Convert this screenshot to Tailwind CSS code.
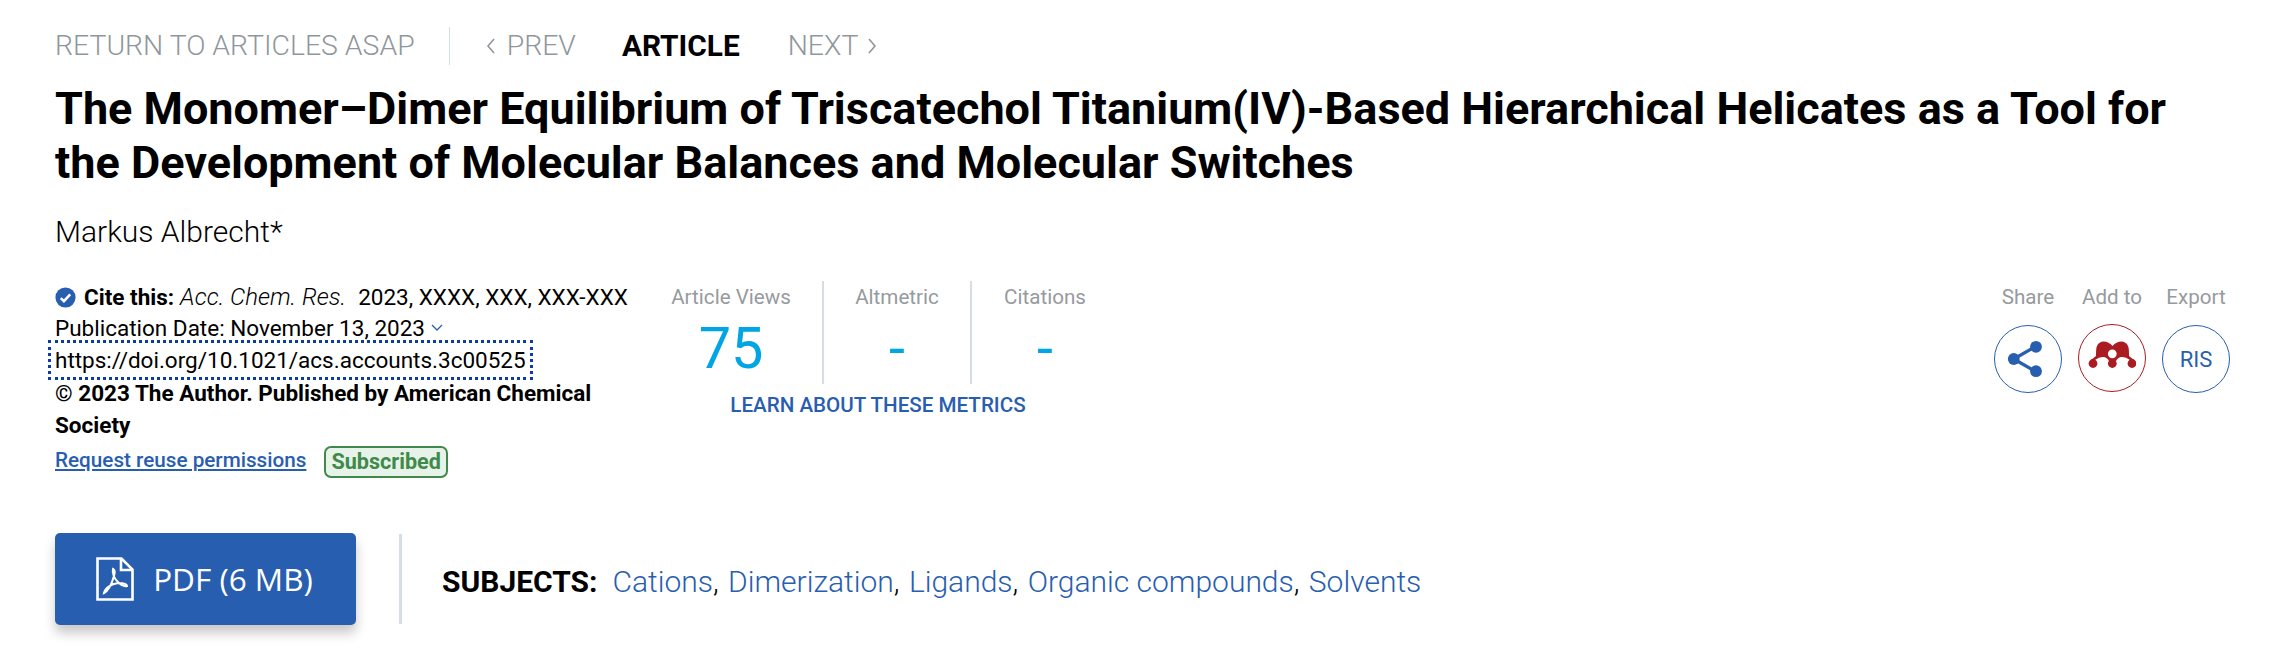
<!DOCTYPE html>
<html><head><meta charset="utf-8"><script src="https://cdn.jsdelivr.net/npm/@tailwindcss/browser@4"></script></head>
<body class="bg-white">
<div class="w-[2270px] h-[658px] overflow-hidden bg-white text-black pl-[55px] pr-[40px] font-['Roboto',sans-serif]">
  <nav class="flex items-center h-[38px] mt-[27px] text-[28.4px] font-light text-[#8f979c] leading-none">
    <span>RETURN TO ARTICLES ASAP</span>
    <span class="w-px h-[38px] bg-[#d5dee5] ml-[34px] mr-[35px]"></span>
    <svg class="w-[12px] h-[18px] mr-[10px]" viewBox="0 0 12 18" fill="none" stroke="#8f979c" stroke-width="1.6"><path d="M9 2 3 9l6 7"/></svg>
    <span>PREV</span>
    <span class="ml-[46px] font-bold text-black text-[29.8px]">ARTICLE</span>
    <span class="ml-[48px]">NEXT</span>
    <svg class="w-[12px] h-[18px] ml-[8px]" viewBox="0 0 12 18" fill="none" stroke="#8f979c" stroke-width="1.6"><path d="M3 2l6 7-6 7"/></svg>
  </nav>
  <h1 class="mt-[17px] text-[45px] leading-[54px] font-bold w-[2125px]">The Monomer–Dimer Equilibrium of Triscatechol Titanium(IV)-Based Hierarchical Helicates as a Tool for the Development of Molecular Balances and Molecular Switches</h1>
  <div class="mt-[24px] mb-[1px] text-[30px] font-light leading-[36px]">Markus Albrecht*</div>
  <div class="flex mt-[30px]">
    <div class="w-[570px] text-[22.5px] leading-[32px] shrink-0">
      <div class="flex items-center h-[32px] mt-[1px] -mb-[1px] whitespace-nowrap">
        <svg class="w-[21px] h-[21px] mr-[8px] shrink-0" viewBox="0 0 20 20"><circle cx="10" cy="10" r="9.6" fill="#285eb0"/><path d="M5.5 10.5l3 3 6-6.5" fill="none" stroke="#fff" stroke-width="2.4"/></svg>
        <b class="font-bold">Cite this:</b><i class="ml-[6px] font-light text-[24px]">Acc. Chem. Res.</i><span class="ml-[12px]">2023, XXXX, XXX, XXX-XXX</span>
      </div>
      <div class="flex items-center whitespace-nowrap h-[32px]">Publication Date: November 13, 2023<svg class="w-[14px] h-[10px] ml-[5px] shrink-0" viewBox="0 0 14 10" fill="none" stroke="#285eb0" stroke-width="1.3"><path d="M2 2l5 5 5-5"/></svg></div>
      <div class="w-fit h-[32px] whitespace-nowrap outline-[3px] outline-dotted outline-offset-[1px] outline-[#0a3ca5] px-[3px] -ml-[3px]">https://doi.org/10.1021/acs.accounts.3c00525</div>
      <div class="font-bold w-[540px] mt-[1px]">© 2023 The Author. Published by American Chemical Society</div>
      <div class="flex items-center h-[34px] mt-[2px]">
        <a class="text-[#285eb0] text-[20.7px] font-medium underline">Request reuse permissions</a>
        <span class="ml-[18px] h-[32px] leading-[28px] px-[5px] rounded-[7px] border-2 border-[#3f8a4a] bg-[#e7f3e8] text-[#3f8a4a] text-[21.6px] font-bold mt-[4px]">Subscribed</span>
      </div>
    </div>
    <div class="w-[478px] ml-[15px] mt-[1px] shrink-0">
      <div class="flex h-[103px]">
        <div class="w-[184px] flex flex-col items-center border-r-2 border-[#d5dee5] shrink-0">
          <span class="text-[20.6px] leading-[28px] mt-[2px] text-[#969a9e]">Article Views</span>
          <span class="text-[57.6px] leading-[72px] text-[#00a5e3] mt-[2px]">75</span>
        </div>
        <div class="w-[148px] flex flex-col items-center border-r-2 border-[#d5dee5] shrink-0">
          <span class="text-[20.6px] leading-[28px] mt-[2px] text-[#969a9e]">Altmetric</span>
          <span class="text-[57.6px] leading-[72px] text-[#00a5e3] mt-[2px]">-</span>
        </div>
        <div class="w-[146px] flex flex-col items-center shrink-0">
          <span class="text-[20.6px] leading-[28px] mt-[2px] text-[#969a9e]">Citations</span>
          <span class="text-[57.6px] leading-[72px] text-[#00a5e3] mt-[2px]">-</span>
        </div>
      </div>
      <div class="text-center text-[20.6px] leading-[28px] font-medium text-[#285eb0] mt-[7px] -translate-x-[1px]">LEARN ABOUT THESE METRICS</div>
    </div>
    <div class="ml-auto flex mt-[3px] gap-[16px] items-start">
      <div class="flex flex-col items-center w-[68px]">
        <span class="text-[20.6px] leading-[28px] text-[#969a9e]">Share</span>
        <span class="mt-[14px] w-[68px] h-[68px] rounded-full border-[1.5px] border-[#285eb0] flex items-center justify-center">
          <svg class="w-[40px] h-[40px] mr-[4px]" viewBox="0 0 36 36"><path d="M28 6 7 18l21 12" fill="none" stroke="#285eb0" stroke-width="3"/><circle cx="27" cy="7" r="5.3" fill="#285eb0"/><circle cx="7" cy="18" r="5.3" fill="#285eb0"/><circle cx="27" cy="29" r="5.3" fill="#285eb0"/></svg>
        </span>
      </div>
      <div class="flex flex-col items-center w-[68px]">
        <span class="text-[20.6px] leading-[28px] text-[#969a9e] whitespace-nowrap">Add to</span>
        <span class="mt-[13px] w-[68px] h-[68px] rounded-full border-[1.5px] border-[#ab1c22] flex items-center justify-center">
          <svg class="w-[48px] h-[28px] mb-[8px]" viewBox="0 0 48 28"><path d="M3 20 8 16C8 12 8 8 9 6 10 3 13 1.5 15.5 1.5 19 1.5 22 3 24.5 6 27 3 30 1.5 33.5 1.5 36 1.5 39 3 40 6 41 8 41 12 41 16L46 20H42C39 18 37 17 34 17 31 17 29 19 28 21H21C20 19 18 17 15 17 12 17 10 18 7 20Z" fill="#ab1c22"/><circle cx="24.3" cy="13.8" r="4.4" fill="#fff"/><circle cx="5" cy="23.5" r="4.4" fill="#ab1c22"/><circle cx="24.3" cy="23.5" r="4.4" fill="#ab1c22"/><circle cx="44" cy="23.5" r="4.4" fill="#ab1c22"/></svg>
        </span>
      </div>
      <div class="flex flex-col items-center w-[68px]">
        <span class="text-[20.6px] leading-[28px] text-[#969a9e]">Export</span>
        <span class="mt-[14px] w-[68px] h-[68px] rounded-full border-[1.5px] border-[#285eb0] flex items-center justify-center text-[#285eb0] text-[22px]">RIS</span>
      </div>
    </div>
  </div>
  <div class="flex items-center mt-[56px]">
    <a class="w-[301px] h-[92px] rounded-[5px] bg-[#285eb0] shadow-[0_8px_12px_rgba(0,0,0,0.22)] flex items-center justify-center text-white text-[31.5px]">
      <svg class="w-[38px] h-[44px] mr-[19px] -ml-[2px]" viewBox="0 0 38 44" fill="none" stroke="#fff" stroke-width="2.6"><path d="M1.5 1.5h24l11 11v30h-35z"/><path d="M25 2v11h11"/><path d="M8 36C12 34 16 26 18 19 19 16 19 13 17 12 16 16 18 22 23 26 25 28 28 30 31 29 31 27 27 26 22 26 15 27 9 31 8 36Z" stroke-width="2"/></svg>
      <span class="font-['Open_Sans']">PDF (6 MB)</span>
    </a>
    <span class="w-[3px] h-[90px] bg-[#d5dee5] ml-[43px]"></span>
    <div class="ml-[40px] pt-[4px] text-[30px] font-light text-[#285eb0] whitespace-nowrap">
      <b class="font-bold text-black">SUBJECTS:</b><span class="ml-[15px]">Cations</span><span class="text-black mr-[2px]">,</span> <span>Dimerization</span><span class="text-black mr-[2px]">,</span> <span>Ligands</span><span class="text-black mr-[2px]">,</span> <span>Organic compounds</span><span class="text-black mr-[2px]">,</span> <span>Solvents</span>
    </div>
  </div>
</div>
</body></html>
